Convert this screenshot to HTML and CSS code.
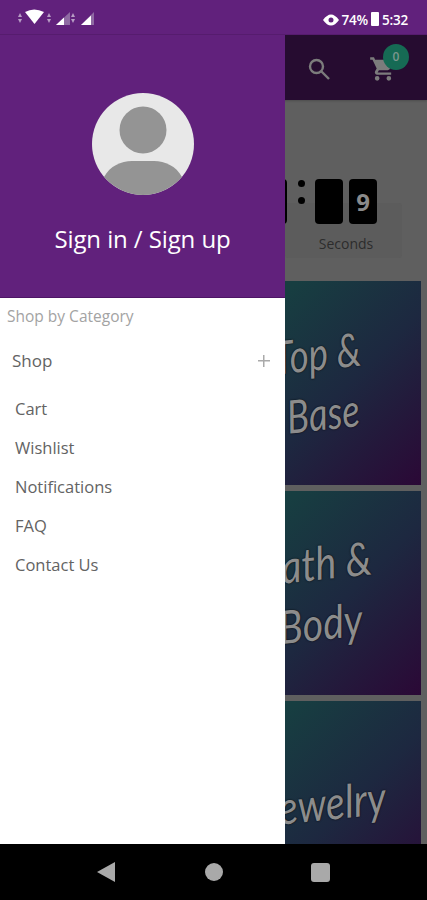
FILE: index.html
```html
<!DOCTYPE html>
<html lang="en">
<head>
<meta charset="utf-8">
<title>Shop menu</title>
<link rel="stylesheet" href="styles.css">
</head>
<body>
<div class="screen">
  <header class="status">
    <svg class="status-left" width="80" height="18" viewBox="0 0 80 18">
      <path class="dim" d="M1 10 3 6 5 10ZM1 12H5L3 16Z"/>
      <path d="M8 5Q17 0 27 5L17.500 17Z"/>
      <path class="dim" d="M30 10 32 6 34 10ZM30 12H34L32 16Z"/>
      <path class="half" d="M39 18 53 5V18Z"/>
      <path d="M39 18 47 10.500V18Z"/>
      <path class="dim" d="M54 10 56 6 58 10ZM54 12H58L56 16Z"/>
      <path class="half" d="M64 18 77 5V18Z"/>
      <path d="M64 18 74 8.500V18Z"/>
    </svg>
    <div class="status-right">
      <svg width="16" height="12" viewBox="0 0 16 12"><path fill-rule="evenodd" d="M0 6Q4 .5 8 .5T16 6Q12 11.500 8 11.500T0 6ZM8 3.500A2.500 2.500 0 1 0 8 8.500 2.500 2.500 0 1 0 8 3.500Z"/></svg>
      <span>74%</span>
      <span class="battery"></span>
      <span>5:32</span>
    </div>
  </header>

  <div class="stage">
    <div class="app">
      <div class="toolbar">
        <svg class="tool-icon" width="24" height="24" viewBox="0 0 24 24"><circle cx="9.500" cy="9.500" r="6.500"/><path d="M14 14l8 8"/></svg>
        <div class="cart">
          <svg width="28" height="28" viewBox="0 0 24 24"><path d="M7 18a2 2 0 1 0 0 4 2 2 0 0 0 0-4ZM1 2v2h2l3.600 7.600-1.400 2.400C4.500 15.400 5.500 17 7 17h12v-2H7.400l1.100-2h7.500c.7 0 1.400-.4 1.700-1l3.600-6.500A1 1 0 0 0 21 4H5.200l-.9-2ZM17 18a2 2 0 1 0 0 4 2 2 0 0 0 0-4Z"/></svg>
          <span class="badge">0</span>
        </div>
      </div>
      <div class="timer">
        <div class="digits">
          <span class="digit"></span>
          <span class="colon"><i></i><i></i></span>
          <span class="digit"></span>
          <span class="digit">9</span>
        </div>
        <div class="timer-label">Seconds</div>
      </div>
      <div class="cards">
        <div class="card card-top"><span>Top &amp;<br>Base</span></div>
        <div class="card"><span>Bath &amp;<br>Body</span></div>
        <div class="card card-last"><span>Jewelry</span></div>
      </div>
    </div>
    <aside class="drawer">
      <div class="drawer-head">
        <svg class="avatar" width="102" height="102" viewBox="0 0 102 102">
          <circle cx="51" cy="51" r="51" fill="#e8e8e8"/>
          <circle cx="51" cy="37" r="23.500" fill="#949494"/>
          <path d="M12 84C18 73 29 68 40 68H62C73 68 84 73 90 84 80 95 66 102 51 102S22 95 12 84Z" fill="#949494"/>
        </svg>
        <div class="sign">Sign in / Sign up</div>
      </div>
      <div class="drawer-body">
        <div class="section">Shop by Category</div>
        <div class="shop"><span>Shop</span><span class="plus"></span></div>
        <ul class="menu">
          <li>Cart</li>
          <li>Wishlist</li>
          <li>Notifications</li>
          <li>FAQ</li>
          <li>Contact Us</li>
        </ul>
      </div>
    </aside>
  </div>

  <nav class="nav">
    <svg width="18" height="20" viewBox="0 0 18 20"><path d="M0 10 18 0V20Z"/></svg>
    <svg class="nav-home" width="18" height="18" viewBox="0 0 18 18"><circle cx="9" cy="9" r="9"/></svg>
    <svg width="19" height="19" viewBox="0 0 19 19"><rect width="19" height="19" rx="3"/></svg>
  </nav>
</div>
</body>
</html>
```

FILE: styles.css
```css
* { box-sizing: border-box; }
html, body { margin: 0; height: 100%; }
body { font-family: "Open Sans", "Liberation Sans", sans-serif; background: #000; }

.screen { width: 427px; height: 900px; display: flex; flex-direction: column; overflow: hidden; }

.status {
  height: 35px; flex: none; background: #61217c; border-bottom: 1px solid #561c6e;
  display: flex; align-items: center; justify-content: space-between;
  padding: 0 19px 0 17px; color: #fff;
}
.status svg { fill: #fff; display: block; }
.status .dim { fill: #b79cc4; }
.status .half { fill: #8f6aa3; }
.status-left { margin-top: -2px; }
.status-right { display: flex; align-items: center; gap: 2px; font-size: 13.500px; font-weight: 600; margin-top: 6px; letter-spacing: -.2px; }
.battery { width: 8px; height: 14px; background: #fff; border-radius: 1px; margin: -3px 1px 0; }

.stage { flex: 1; position: relative; overflow: hidden; }
.app { height: 100%; background: #5f5f5f; }

.toolbar {
  height: 65px; background: #260c30; display: flex; align-items: center; justify-content: flex-end;
  padding: 0 30px 0 0; gap: 38px; box-shadow: 0 1px 2px rgba(0,0,0,.2);
}
.tool-icon { fill: none; stroke: #7c7c7c; stroke-width: 2.400; margin-top: 2px; }
.cart { position: relative; width: 28px; height: 28px; margin-top: 2px; }
.cart svg { fill: #7c7c7c; display: block; }
.badge {
  position: absolute; top: -11px; left: 14px; width: 26px; height: 26px; border-radius: 50%;
  background: #166a54; color: #7c968e; font-size: 12px; font-weight: 600;
  display: flex; align-items: center; justify-content: center;
}

.timer {
  margin: 103px 25px 0 auto; width: 117px; height: 55px; background: #5c5c5c; position: relative;
  display: flex; flex-direction: column; align-items: center; justify-content: flex-end; padding-bottom: 5px;
  border-radius: 3px; color: #2c2c2c;
}
.timer-label { font-size: 14px; line-height: 19px; padding-left: 5px; }
.digits { position: absolute; top: -24px; right: 25px; display: flex; gap: 6px; align-items: flex-start; }
.digit {
  width: 28px; height: 45px; background: #000; border-radius: 4px; color: #8a8a8a;
  font-size: 24px; font-weight: 700; display: flex; align-items: center; justify-content: center;
}
.colon { width: 16px; height: 45px; display: flex; flex-direction: column; align-items: center; gap: 10px; padding-top: 1px; }
.colon i { width: 7px; height: 7px; border-radius: 50%; background: #000; }

.cards { margin: 23px 6px 0 215px; display: flex; flex-direction: column; gap: 6px; }
.card {
  height: 204px; flex: none; color: #8c8c8c;
  background: linear-gradient(135deg, #173e41 20%, #1d2840 58%, #2b0836 100%);
  display: flex; align-items: center; justify-content: center; text-align: center;
  font-family: "Lato", sans-serif; font-style: italic; font-weight: 400; font-size: 46px; line-height: 60px;
  text-shadow: 0 0 2px #000;
}
.card span { transform: rotate(-6deg) scaleX(.86); display: block; padding-right: 2px; }
.card-top span { transform: rotate(-6deg) scaleX(.8); margin-left: 6px; }
.card-last span { margin-left: 14px; }

.drawer { position: absolute; top: 0; left: 0; bottom: 0; width: 285px; background: #fff; display: flex; flex-direction: column; }
.drawer-head {
  height: 263px; flex: none; background: #61217c; border-bottom: 1px solid #4e1566;
  display: flex; flex-direction: column; align-items: center; padding-top: 58px;
}
.avatar { display: block; margin-left: 1px; }
.sign { color: #fff; font-size: 24px; line-height: 32px; margin-top: 28px; letter-spacing: -.1px; }

.drawer-body { color: #636363; }
.section { font-size: 15.500px; line-height: 20px; color: #a3a3a3; padding: 8px 0 0 7px; }
.shop {
  display: flex; justify-content: space-between; align-items: center;
  font-size: 17px; line-height: 23px; padding: 23px 15px 0 12px;
}
.plus { width: 12px; height: 12px;
  background: linear-gradient(#aaa,#aaa) center/12px 1.500px no-repeat, linear-gradient(#aaa,#aaa) center/1.500px 12px no-repeat; }
.menu { list-style: none; margin: 17px 0 0; padding: 0 0 0 15px; font-size: 16.500px; }
.menu li { height: 39px; line-height: 39px; }

.nav { height: 56px; flex: none; background: #000; display: flex; align-items: center; padding: 0 97px; justify-content: space-between; }
.nav svg { fill: #a9a9a9; display: block; }
.nav-home { margin-left: 2px; }
```
